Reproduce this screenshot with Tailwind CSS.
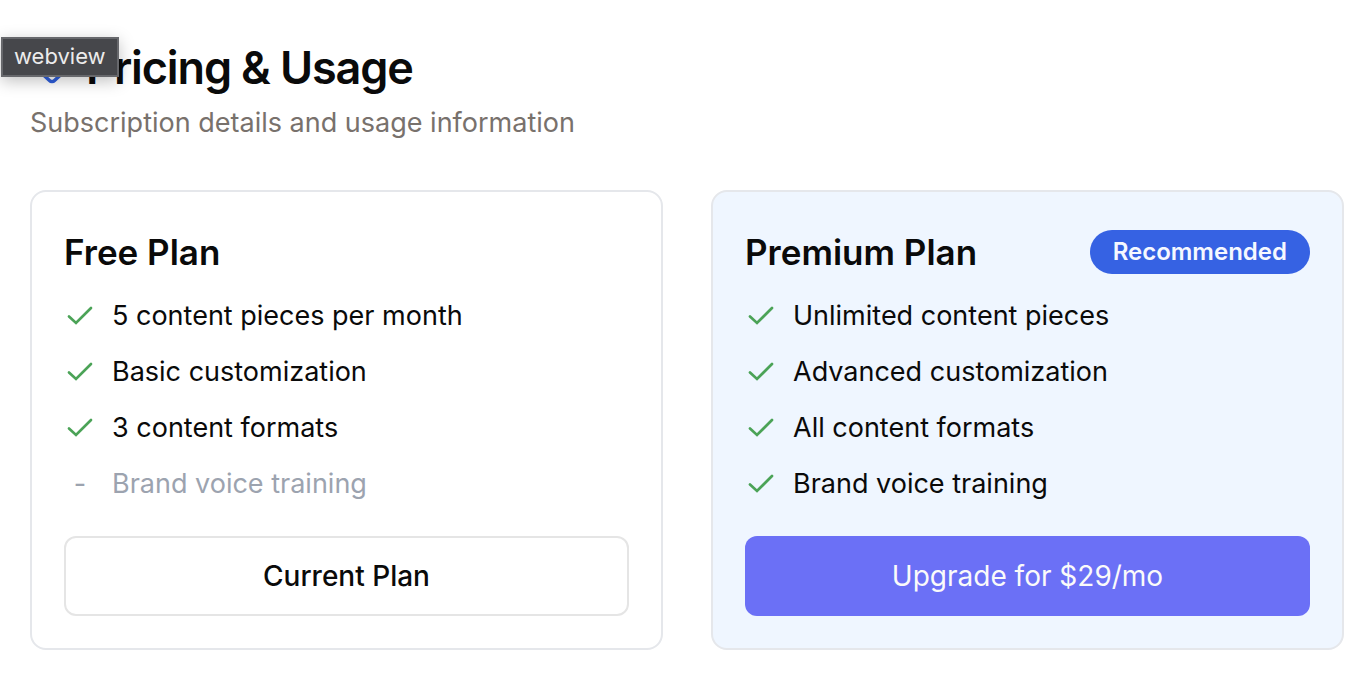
<!DOCTYPE html>
<html lang="en">
<head>
<meta charset="utf-8">
<title>Pricing &amp; Usage</title>
<script src="https://cdn.jsdelivr.net/npm/@tailwindcss/browser@4"></script>
</head>
<body class="bg-white font-['Inter',sans-serif] text-[#0a0a0a]">
<svg class="hidden"><symbol id="check" viewBox="0 0 32 32"><path d="M5 16.500 L12 23 L27 8" fill="none" stroke="#4ba357" stroke-width="2.700" stroke-linecap="round" stroke-linejoin="miter"/></symbol></svg>
<div class="absolute left-px top-[37px] z-10 border-2 border-[#67686c] bg-[#46474b] px-[11px] pt-[3px] pb-[5px] text-[22px] leading-7 text-[#ececec] shadow-[0_4px_16px_rgba(0,0,0,0.25)]">webview</div>
<main class="pl-[30px] pr-[14px] pt-10">
<header>
<h1 class="flex items-center gap-3 text-[45px] font-semibold leading-14 tracking-tight">
<svg class="size-11" viewBox="0 0 44 44" fill="none" stroke="#2f5fdc" stroke-width="3.500" stroke-linecap="round" stroke-linejoin="round"><path d="M7 17a4.500 4.500 0 0 0 0 6l12.500 11.500a3.500 3.500 0 0 0 5 0L37 23a4.500 4.500 0 0 0 0-6L24.500 6a3.500 3.500 0 0 0-5 0Z"/></svg>
Pricing &amp; Usage</h1>
<p class="mt-[7px] text-[27px] leading-10 text-[#78716c]">Subscription details and usage information</p>
</header>
<div class="mt-[47px] grid grid-cols-2 gap-12">
<section class="flex flex-col rounded-2xl border-2 border-[#e5e7eb] p-8">
<div class="flex h-14 items-center"><h2 class="text-[35px] font-semibold">Free Plan</h2></div>
<ul class="mt-4 flex flex-col gap-4 text-[27px] leading-10">
<li class="flex items-center gap-4"><svg class="size-8"><use href="#check"/></svg>5 content pieces per month</li>
<li class="flex items-center gap-4"><svg class="size-8"><use href="#check"/></svg>Basic customization</li>
<li class="flex items-center gap-4"><svg class="size-8"><use href="#check"/></svg>3 content formats</li>
<li class="flex items-center gap-4 text-[#9ca3af]"><span class="w-8 text-center">-</span>Brand voice training</li>
</ul>
<button class="mt-8 h-20 rounded-xl border-2 border-[#e5e5e5] bg-white text-[28px] font-medium">Current Plan</button>
</section>
<section class="flex flex-col rounded-2xl border-2 border-[#e5e7eb] bg-[#eff6ff] p-8">
<div class="flex h-14 items-center justify-between"><h2 class="text-[35px] font-semibold">Premium Plan</h2><span class="rounded-full bg-[#3662e3] px-[23px] py-1.5 text-[24px] font-semibold leading-8 text-[#f5f8ff]">Recommended</span></div>
<ul class="mt-4 flex flex-col gap-4 text-[27px] leading-10">
<li class="flex items-center gap-4"><svg class="size-8"><use href="#check"/></svg>Unlimited content pieces</li>
<li class="flex items-center gap-4"><svg class="size-8"><use href="#check"/></svg>Advanced customization</li>
<li class="flex items-center gap-4"><svg class="size-8"><use href="#check"/></svg>All content formats</li>
<li class="flex items-center gap-4"><svg class="size-8"><use href="#check"/></svg>Brand voice training</li>
</ul>
<button class="mt-8 h-20 rounded-xl bg-[#6b70f6] text-[28px] text-[#fafafa]">Upgrade for $29/mo</button>
</section>
</div>
</main>
</body>
</html>
